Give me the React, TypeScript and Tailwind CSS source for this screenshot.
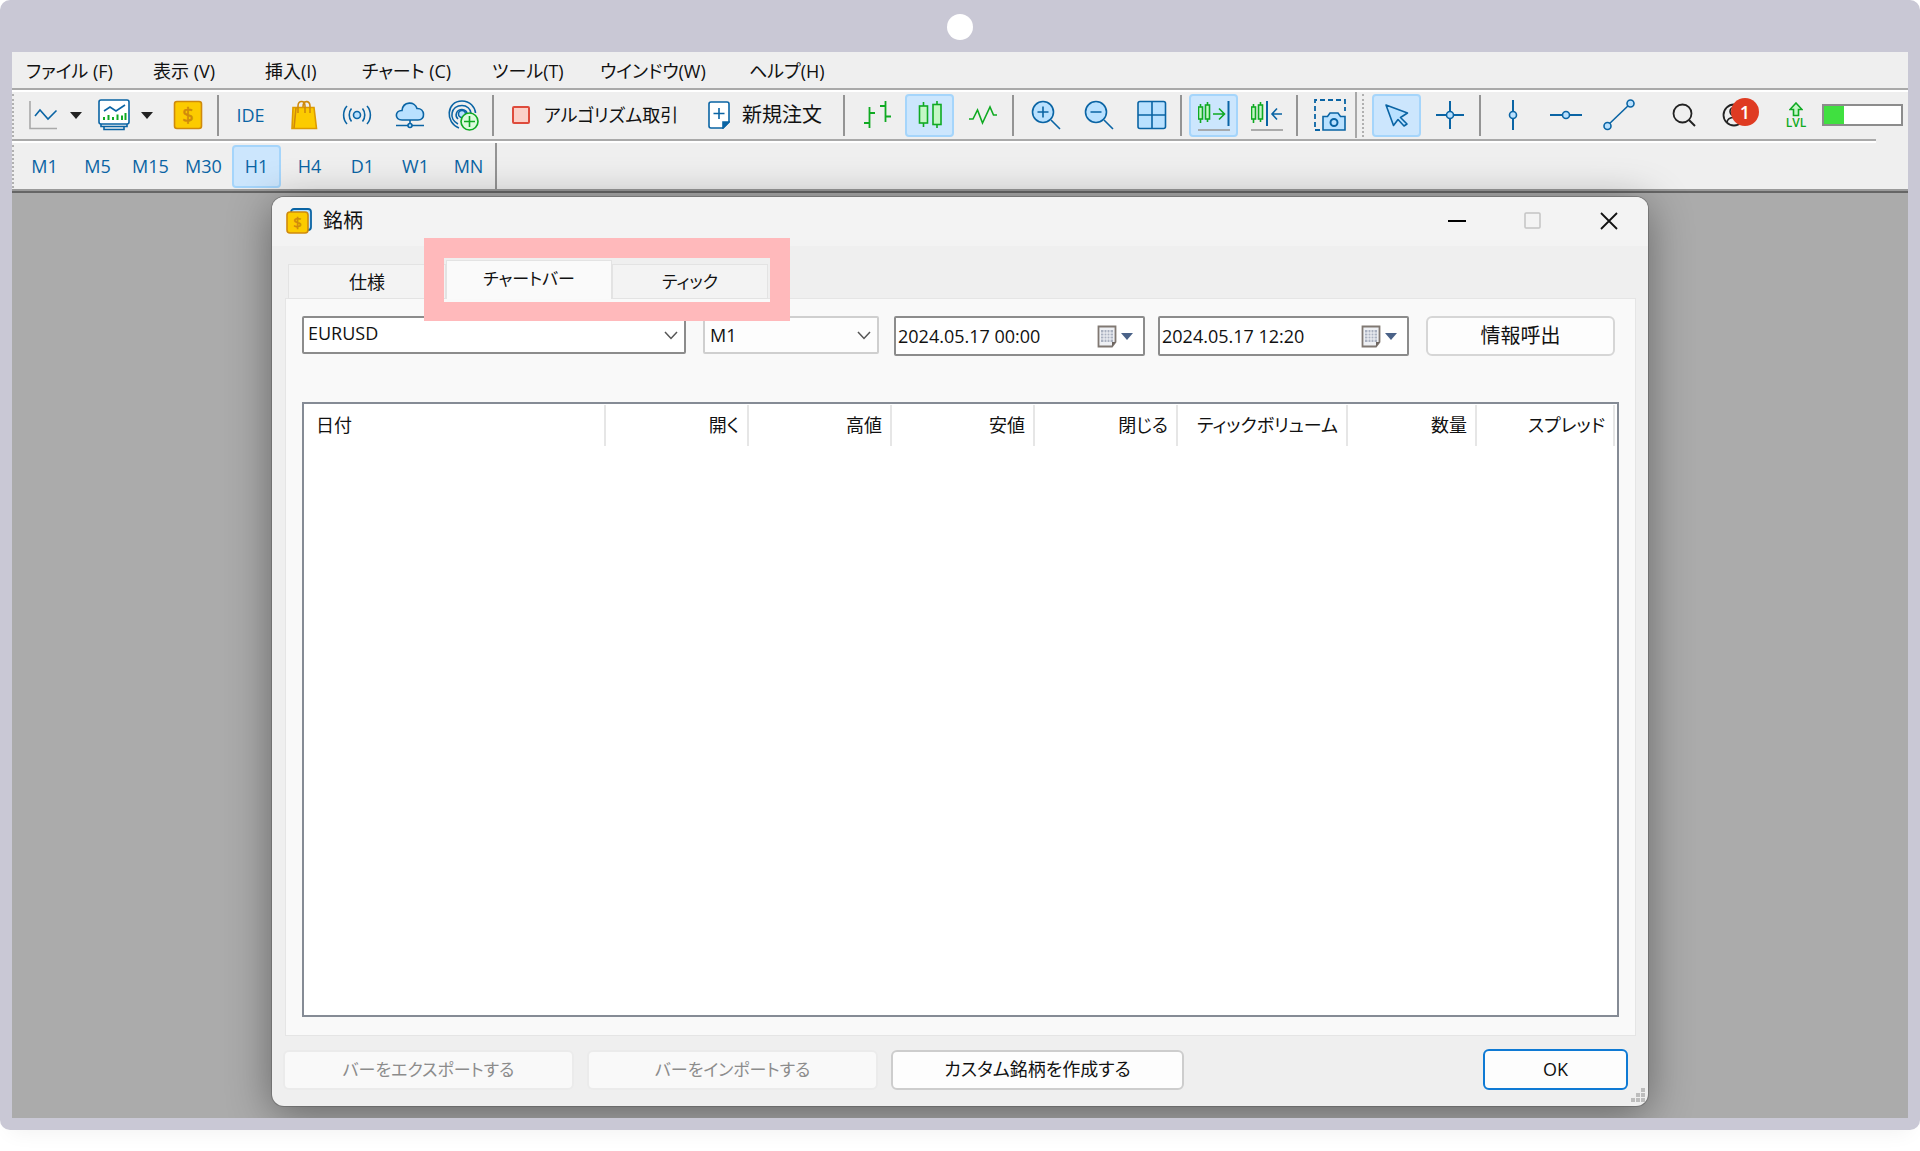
import type { ReactNode } from "react";
import clsx from "clsx";

const BLUE = "#0a64a4";
const SKY = "#b9e1ff";
const GREEN = "#0faa22";
const MINT = "#c4f7c6";

const menus = [
  { label: "ファイル (F)", width: "w-[127px]" },
  { label: "表示 (V)", width: "w-[112px]" },
  { label: "挿入(I)", width: "w-[97px]" },
  { label: "チャート (C)", width: "w-[130px]" },
  { label: "ツール(T)", width: "w-[108px]" },
  { label: "ウインドウ(W)", width: "w-[149px]" },
  { label: "ヘルプ(H)", width: "w-[108px]" },
];

const timeframes = ["M1", "M5", "M15", "M30", "H1", "H4", "D1", "W1", "MN"];

const columns = [
  { label: "日付", width: "" },
  { label: "開く", width: "w-[143px]" },
  { label: "高値", width: "w-[143px]" },
  { label: "安値", width: "w-[143px]" },
  { label: "閉じる", width: "w-[143px]" },
  { label: "ティックボリューム", width: "w-[170px]" },
  { label: "数量", width: "w-[129px]" },
  { label: "スプレッド", width: "w-[138px]" },
];

function Icon({ children, stroke = BLUE }: { children: ReactNode; stroke?: string }) {
  return (
    <svg width="32" height="32" viewBox="0 0 32 32" fill="none" stroke={stroke} strokeWidth="1.6" className="shrink-0" aria-hidden="true">
      {children}
    </svg>
  );
}

function Tool({ label, active, children }: { label: string; active?: boolean; children: ReactNode }) {
  return (
    <button
      type="button"
      aria-label={label}
      className={clsx(
        "mx-[2px] flex h-[43px] w-[49px] shrink-0 items-center justify-center rounded-[4px] border-2 text-[18px] text-[#0a64a4]",
        active ? "border-[#a5d5fb] bg-[#cce6fd]" : "border-transparent",
      )}
    >
      {children}
    </button>
  );
}

function SplitTool({ label, children }: { label: string; children: ReactNode }) {
  return (
    <button type="button" aria-label={label} className="flex w-[71px] shrink-0 items-center gap-[11px] pl-[10px]">
      {children}
      <svg width="12" height="7" viewBox="0 0 12 7" aria-hidden="true">
        <path d="M0 0H12L6 7Z" fill="#222" />
      </svg>
    </button>
  );
}

function Separator() {
  return (
    <div className="w-[10px] shrink-0 pl-[3px]">
      <div className="h-[41px] w-[2px] bg-[#949494]" />
    </div>
  );
}

function Grip() {
  return <div className="h-[43px] w-0 shrink-0 border-l-2 border-dotted border-[#b0b0b0]" />;
}

function Candles({ x = 0 }: { x?: number }) {
  return (
    <g stroke={GREEN} fill={MINT}>
      <path d={`M${x + 3.5} 5V24M${x + 10.5} 3V23`} />
      <rect x={x + 1.5} y="8" width="4" height="12" />
      <rect x={x + 8.5} y="6" width="4" height="14" />
    </g>
  );
}

function Toolbar() {
  return (
    <div className="flex h-[47px] items-center pb-px">
      <Grip />
      <div className="flex items-center pl-[3px] pr-[2px]">
        <SplitTool label="ライン">
          <Icon>
            <path d="M3 2V29.5H30" stroke="#a9a9a9" />
            <path d="M8 17L13 11L21 20L29.5 11.5" />
          </Icon>
        </SplitTool>
        <SplitTool label="プロファイル">
          <Icon>
            <rect x="1" y="1" width="30" height="24" rx="2" fill="#fff" />
            <path d="M6 12L12 8L18 12L27 6" />
            <path d="M6 21V18M10.500 21V16M15 21V18M19.500 21V15.500M24 21V16.500M27.500 21V14" stroke={GREEN} strokeWidth="2" />
            <path d="M3 25V27.500H29V25M6 27.500V30.500H26V27.500" />
          </Icon>
        </SplitTool>
      </div>
      <Tool label="銘柄">
        <Icon stroke="#cf8a0c">
          <rect x="2.500" y="2.500" width="27" height="27" rx="2.500" fill="#fccb00" />
          <text x="16" y="23" textAnchor="middle" fontSize="20" fill="#cf8a0c" stroke="#cf8a0c" strokeWidth="0.500">$</text>
        </Icon>
      </Tool>
      <Separator />
      <Tool label="IDE">IDE</Tool>
      <Tool label="マーケット">
        <Icon stroke="#cf8a0c">
          <path d="M5 8.500H26L28.500 29.500H4Z" fill="#fccb00" stroke="#dd9b00" />
          <path d="M10 14V7C10 1 17 1 17 7V14M15 8C15 1 22 1 22 7V14" />
          <path d="M8 9L6 29" />
        </Icon>
      </Tool>
      <Tool label="シグナル">
        <Icon>
          <circle cx="16" cy="16" r="3.500" fill={SKY} />
          <path d="M10.500 9.500C7.500 13 7.500 19 10.500 22.500M6 7C1.500 12 1.500 20 6 25M21.500 9.500C24.500 13 24.500 19 21.500 22.500M26 7C30.500 12 30.500 20 26 25" />
        </Icon>
      </Tool>
      <Tool label="クラウド">
        <Icon>
          <path d="M8 21C0 21 1 11 8 11.500C9 2 21 2 23 9.500C31 9 32 21 24 21Z" fill={SKY} />
          <path d="M16 21V25M2 26.500H14M18 26.500H30" />
          <circle cx="16" cy="26.500" r="2" fill={SKY} />
        </Icon>
      </Tool>
      <Tool label="VPS">
        <Icon>
          <circle cx="15" cy="15" r="3.500" fill={SKY} />
          <path d="M12 29C-2 24 -1 2 15 2C23 2 28 8 28.500 14M11 25C1 20 4 6.500 15 6.500C20 6.500 23.500 10 24 14M11 20C7 16 10 10.500 15 10.500C18 10.500 20 13 20 14.500" />
          <circle cx="22.500" cy="22.500" r="8.500" fill="#dcfadd" stroke={GREEN} />
          <path d="M22.500 17V28M17 22.500H28" stroke={GREEN} />
        </Icon>
      </Tool>
      <Separator />
      <button type="button" className="flex w-[196px] shrink-0 items-center gap-[14px] whitespace-nowrap pl-[13px] text-[18px]">
        <span className="size-[18px] rounded-[2px] border-2 border-[#de4b3c] bg-[#fbd0c8]" />
        アルゴリズム取引
      </button>
      <button type="button" className="flex w-[145px] shrink-0 items-center gap-[12px] whitespace-nowrap pl-[13px] text-[20px]">
        <svg width="22" height="28" viewBox="0 0 22 28" fill="none" stroke={BLUE} strokeWidth="1.6" aria-hidden="true">
          <path d="M3 1H19Q21 1 21 3V21L15 27H3Q1 27 1 25V3Q1 1 3 1Z" fill="#fff" />
          <path d="M21 21L15 27V21Z" fill={BLUE} />
          <path d="M11 7V18M5.500 12.500H16.500" />
        </svg>
        新規注文
      </button>
      <Separator />
      <Tool label="バーチャート">
        <Icon stroke={GREEN}>
          <path d="M8.500 8V29M8.500 14H14M3 24H8.500M24.500 2V23M19 7H24.500M24.500 17.500H30" strokeWidth="1.800" />
        </Icon>
      </Tool>
      <Tool label="ローソク足" active>
        <Icon stroke={GREEN}>
          <path d="M9.500 3V28M23 2V29" />
          <rect x="5.500" y="7" width="8" height="17" fill={MINT} />
          <rect x="19" y="5.500" width="8" height="20" fill={MINT} />
        </Icon>
      </Tool>
      <Tool label="ラインチャート">
        <Icon stroke={GREEN}>
          <path d="M2 20H6L10.500 11L15.500 24L23 8L26.500 16H30" />
        </Icon>
      </Tool>
      <Separator />
      <Tool label="拡大">
        <Icon>
          <circle cx="13" cy="13" r="10.500" fill={SKY} />
          <path d="M21 21L30 30M13 7.500V18.500M7.500 13H18.500" />
        </Icon>
      </Tool>
      <Tool label="縮小">
        <Icon>
          <circle cx="13" cy="13" r="10.500" fill={SKY} />
          <path d="M21 21L30 30M7.500 13H18.500" />
        </Icon>
      </Tool>
      <Tool label="ウインドウ整列">
        <Icon>
          <rect x="2" y="2.500" width="27.500" height="27" rx="2" fill={SKY} />
          <path d="M16 2.500V29.500M2 16H29.500" />
        </Icon>
      </Tool>
      <div className="-mx-px flex shrink-0 items-center">
        <Separator />
        <Tool label="自動スクロール" active>
          <Icon>
            <Candles x={-1} />
            <path d="M15 15H26M21 9.500L26.500 15L21 20.500" stroke={GREEN} />
            <path d="M30.500 2V27" strokeWidth="2" />
            <path d="M0 31H32" stroke="#9a9a9a" />
          </Icon>
        </Tool>
        <Tool label="チャートシフト">
          <Icon>
            <Candles x={-1} />
            <path d="M16 2V27" strokeWidth="2" />
            <path d="M21 15H31M26 9.500L21 15L26 20.500" />
            <path d="M0 31H32" stroke="#9a9a9a" />
          </Icon>
        </Tool>
        <Separator />
        <Tool label="スクリーンショット">
          <Icon>
            <path d="M6 31H1V1H31V12" strokeDasharray="5 3" strokeWidth="1.800" />
            <path d="M9 17.500H13.500L16 14H24L26.500 17.500H31V31H9Z" fill={SKY} />
            <circle cx="20" cy="23.500" r="3.500" fill={SKY} strokeWidth="2" />
          </Icon>
        </Tool>
      </div>
      <div className="flex h-full w-[15px] shrink-0 items-center pl-[5px] border-l-2 border-[#a8a8a8]">
        <Grip />
      </div>
      <Tool label="カーソル" active>
        <Icon>
          <path d="M5 6L26.500 14L19.500 18.500L26 25L23 27L17 20.500L12.500 26.500Z" fill={SKY} strokeLinejoin="round" />
        </Icon>
      </Tool>
      <Tool label="十字線">
        <Icon>
          <path d="M16 2V30M2 16H30" strokeWidth="2" />
          <circle cx="16" cy="16" r="3.500" fill={SKY} />
        </Icon>
      </Tool>
      <Separator />
      <Tool label="垂直線">
        <Icon>
          <path d="M16 1V31" strokeWidth="2" />
          <circle cx="16" cy="16" r="3.500" fill={SKY} />
        </Icon>
      </Tool>
      <Tool label="水平線">
        <Icon>
          <path d="M0 16H32" strokeWidth="2" />
          <circle cx="16" cy="16" r="3.500" fill={SKY} />
        </Icon>
      </Tool>
      <Tool label="トレンドライン">
        <Icon>
          <path d="M4 27L28 4" />
          <circle cx="4.500" cy="27" r="3.500" fill={SKY} />
          <circle cx="27.500" cy="4.500" r="3.500" fill={SKY} />
        </Icon>
      </Tool>
      <div className="ml-auto flex items-center pr-[5px]">
        <Tool label="検索">
          <Icon stroke="#222">
            <circle cx="14.500" cy="14.500" r="9" strokeWidth="1.800" />
            <path d="M21 21L27 27" strokeWidth="2" />
          </Icon>
        </Tool>
        <div className="relative mr-[7px]">
          <Tool label="アカウント">
            <Icon stroke="#222">
              <circle cx="13" cy="16" r="10.500" strokeWidth="1.800" />
              <circle cx="13" cy="12.500" r="4" />
              <path d="M6 23C7 17 19 17 20 23" />
            </Icon>
          </Tool>
          <span className="absolute right-[4px] top-[4px] flex size-[28px] items-center justify-center rounded-full bg-[#df3b22] text-[18px] font-semibold leading-none text-white">
            1
          </span>
        </div>
        <div className="flex w-[52px] flex-col items-center text-[12px] font-semibold leading-[12px] text-[#0faa22]">
          <svg width="14" height="15" viewBox="0 0 14 15" fill={MINT} stroke={GREEN} strokeWidth="1.600" aria-hidden="true">
            <path d="M7 1L13 7.500H9.500V13.500H4.500V7.500H1Z" />
          </svg>
          LVL
        </div>
        <div className="h-[22px] w-[81px] border-2 border-[#8c8c8c] bg-white">
          <div className="h-full w-[20px] bg-[#40e040]" />
        </div>
      </div>
    </div>
  );
}

function Chevron() {
  return (
    <svg width="14" height="9" viewBox="0 0 14 9" fill="none" stroke="#555" strokeWidth="1.500" className="pointer-events-none absolute right-[8px] top-[15px]" aria-hidden="true">
      <path d="M1 1L7 7.500L13 1" />
    </svg>
  );
}

function DateField({ label, value }: { label: string; value: string }) {
  return (
    <div className="flex h-[40px] w-[251px] items-center rounded-[2px] border-2 border-[#8c8c8c] bg-white pr-[10px]">
      <input aria-label={label} defaultValue={value} className="h-full w-full min-w-0 bg-transparent pl-[2px] text-[18px] outline-none" />
      <button type="button" aria-label="カレンダー" className="flex shrink-0 items-center gap-[4px]">
        <svg width="20" height="23" viewBox="0 0 20 23" fill="none" aria-hidden="true">
          <path d="M1.500 1.500H18.500V17L15 21.500H1.500Z" fill="#eef0f4" stroke="#807872" strokeWidth="1.800" />
          <rect x="4" y="5" width="12" height="12" fill="#aab1c0" />
          <path d="M7 5V17M10 5V17M13 5V17M4 8H16M4 11H16M4 14H16" stroke="#f4f5f8" />
          <path d="M18.500 17L15 21.500V17Z" fill="#6d6560" />
        </svg>
        <svg width="12" height="7" viewBox="0 0 12 7" aria-hidden="true">
          <path d="M0 0H12L6 7Z" fill="#4a6288" />
        </svg>
      </button>
    </div>
  );
}

function SymbolDialog() {
  return (
    <section
      role="dialog"
      aria-label="銘柄"
      className="relative mx-auto flex w-full max-w-[1376px] flex-1 flex-col rounded-[12px] bg-[#efefef] shadow-[0_0_0_1px_rgba(90,90,90,0.5),0_8px_44px_rgba(0,0,0,0.42)]"
    >
      <header className="flex h-[49px] items-center rounded-t-[12px] bg-[#f3f3f3] pb-[2px] pl-[14px]">
        <svg width="26" height="28" viewBox="0 0 26 28" aria-hidden="true">
          <rect x="5" y="2" width="20" height="21" rx="3" fill={SKY} stroke={BLUE} strokeWidth="1.800" />
          <rect x="1" y="5" width="21" height="21" rx="3" fill="#fccb00" stroke="#cf8a0c" strokeWidth="1.600" />
          <text x="11.500" y="21" textAnchor="middle" fontSize="15" fill="#cf8a0c" stroke="#cf8a0c" strokeWidth="0.500">$</text>
        </svg>
        <h1 className="pl-[11px] text-[20px] leading-none">銘柄</h1>
        <div className="ml-auto flex pr-px">
          <button type="button" aria-label="最小化" className="flex h-[46px] w-[76px] items-center justify-center">
            <svg width="18" height="18" viewBox="0 0 18 18"><path d="M0 9H18" stroke="#000" strokeWidth="2" /></svg>
          </button>
          <button type="button" aria-label="最大化" disabled className="flex h-[46px] w-[76px] items-center justify-center">
            <svg width="18" height="18" viewBox="0 0 18 18" fill="none"><rect x="1" y="1" width="15" height="15" rx="1" stroke="#c4c4c4" strokeWidth="1.500" /></svg>
          </button>
          <button type="button" aria-label="閉じる" className="flex h-[46px] w-[76px] items-center justify-center">
            <svg width="18" height="18" viewBox="0 0 18 18"><path d="M1 1L17 17M17 1L1 17" stroke="#111" strokeWidth="1.800" /></svg>
          </button>
        </div>
      </header>

      <div className="flex flex-1 flex-col pb-[16px] pl-[11px] pr-[12px] pt-[14px]">
        <div role="tablist" className="relative z-10 -mb-px flex items-end pl-[5px] text-[18px]">
          <button type="button" role="tab" className="h-[35px] w-[158px] border border-[#e3e3e3] bg-[#f3f3f3] leading-none">
            仕様
          </button>
          <button type="button" role="tab" aria-selected="true" className="h-[39px] w-[166px] border border-b-0 border-[#e3e3e3] bg-[#fafafa] pb-[4px] text-[17px] leading-none">
            チャートバー
          </button>
          <button type="button" role="tab" className="h-[35px] w-[156px] border border-[#e3e3e3] bg-[#f3f3f3] text-[17px] leading-none">
            ティック
          </button>
          {/* callout frame around the two history tabs */}
          <div className="pointer-events-none absolute -top-[22px] left-[141px] h-[83px] w-[366px] border-[20px] border-b-[19px] border-[#ffb9bb]" />
        </div>

        <div className="ml-[2px] flex flex-1 flex-col border border-[#e5e5e5] bg-[#f9f9f9] px-[16px] pb-[18px] pt-[17px]">
          <div className="flex items-start">
            <div className="relative mr-[17px] w-[384px]">
              <select aria-label="銘柄名" className="h-[38px] w-full appearance-none rounded-[2px] border-2 border-[#8c8c8c] bg-white pb-[4px] pl-[4px] text-[18px]">
                <option>EURUSD</option>
              </select>
              <Chevron />
            </div>
            <div className="relative mr-[15px] w-[176px]">
              <select aria-label="時間足" className="h-[38px] w-full appearance-none rounded-[2px] border-2 border-[#cfcfcf] bg-[#fdfdfd] pl-[5px] text-[18px]">
                <option>M1</option>
              </select>
              <Chevron />
            </div>
            <DateField label="開始日時" value="2024.05.17 00:00" />
            <div className="w-[13px]" />
            <DateField label="終了日時" value="2024.05.17 12:20" />
            <button type="button" className="ml-auto mr-[4px] h-[40px] w-[189px] rounded-[6px] border-2 border-[#d6d6d6] bg-[#fdfdfd] text-[20px]">
              情報呼出
            </button>
          </div>

          <div className="mt-[46px] flex-1 border-2 border-[#858b95] bg-white pr-[2px] pt-px">
            <table className="w-full table-fixed text-[18px]">
              <thead>
                <tr>
                  {columns.map((column, i) => (
                    <th
                      key={column.label}
                      scope="col"
                      className={clsx(
                        "h-[41px] whitespace-nowrap border-r-2 border-[#e6e6e6] pb-px font-normal",
                        i === 0 ? "pl-[12px] text-left" : "pr-[8px] text-right",
                        column.width,
                      )}
                    >
                      {column.label}
                    </th>
                  ))}
                </tr>
              </thead>
              <tbody />
            </table>
          </div>
        </div>

        <footer className="mt-[13px] flex items-center text-[18px]">
          <button type="button" disabled className="mr-[13px] h-[40px] w-[291px] rounded-[6px] border-2 border-[#ebebeb] bg-[#f9f9f9] text-[17px] text-[#8c8c8c]">
            バーをエクスポートする
          </button>
          <button type="button" disabled className="mr-[13px] h-[40px] w-[291px] rounded-[6px] border-2 border-[#ebebeb] bg-[#f9f9f9] text-[17px] text-[#8c8c8c]">
            バーをインポートする
          </button>
          <button type="button" className="h-[40px] w-[293px] rounded-[6px] border-2 border-[#cdcdcd] bg-[#fdfdfd]">
            カスタム銘柄を作成する
          </button>
          <button type="button" className="ml-auto mr-[8px] h-[41px] w-[145px] rounded-[6px] border-2 border-[#0f7ad4] bg-[#fdfdfd]">
            OK
          </button>
        </footer>
      </div>

      <svg width="15" height="15" viewBox="0 0 15 15" fill="#bdbdbd" className="absolute bottom-[3px] right-[2px]" aria-hidden="true">
        <path d="M10 0h4v4h-4zM5 5h4v4h-4zM10 5h4v4h-4zM0 10h4v4h-4zM5 10h4v4h-4zM10 10h4v4h-4z" />
      </svg>
    </section>
  );
}

export default function App() {
  return (
    <div className="flex min-h-screen flex-col bg-white pb-[21px] font-['Open_Sans','Noto_Sans_CJK_JP',sans-serif] text-[#111] [font-feature-settings:'palt']">
      <div className="flex flex-1 flex-col rounded-[10px] bg-[#c9c8d5] px-[12px] pb-[12px] shadow-[0_12px_20px_-10px_rgba(0,0,0,0.06)]">
        <div className="flex h-[52px] items-center justify-center pt-[2px]">
          <div className="size-[26px] rounded-full bg-white" />
        </div>
        <div className="flex flex-1 flex-col overflow-hidden bg-[#efefef]">
          <nav className="flex h-[38px] items-center border-b-2 border-[#a9a9a9] pl-[14px] pt-[3px] text-[18px]">
            {menus.map((menu) => (
              <button key={menu.label} type="button" className={clsx("shrink-0 whitespace-nowrap text-left", menu.width)}>
                {menu.label}
              </button>
            ))}
          </nav>
          <div className="border-t-2 border-white">
            <Toolbar />
          </div>
          <div className="mr-[32px] h-[4px] border-b-2 border-t-2 border-b-white border-t-[#a9a9a9]" />
          <div className="flex h-[48px] items-center border-b-2 border-[#9a9a9a]">
            <Grip />
            <div className="flex pl-[4px]">
              {timeframes.map((tf) => (
                <Tool key={tf} label={tf} active={tf === "H1"}>
                  {tf}
                </Tool>
              ))}
            </div>
            <div className="h-full w-[2px] bg-[#949494]" />
          </div>
          <main className="flex flex-1 flex-col border-t-2 border-[#666] bg-[#ababab] pb-[12px] pt-[4px]">
            <SymbolDialog />
          </main>
        </div>
      </div>
    </div>
  );
}
